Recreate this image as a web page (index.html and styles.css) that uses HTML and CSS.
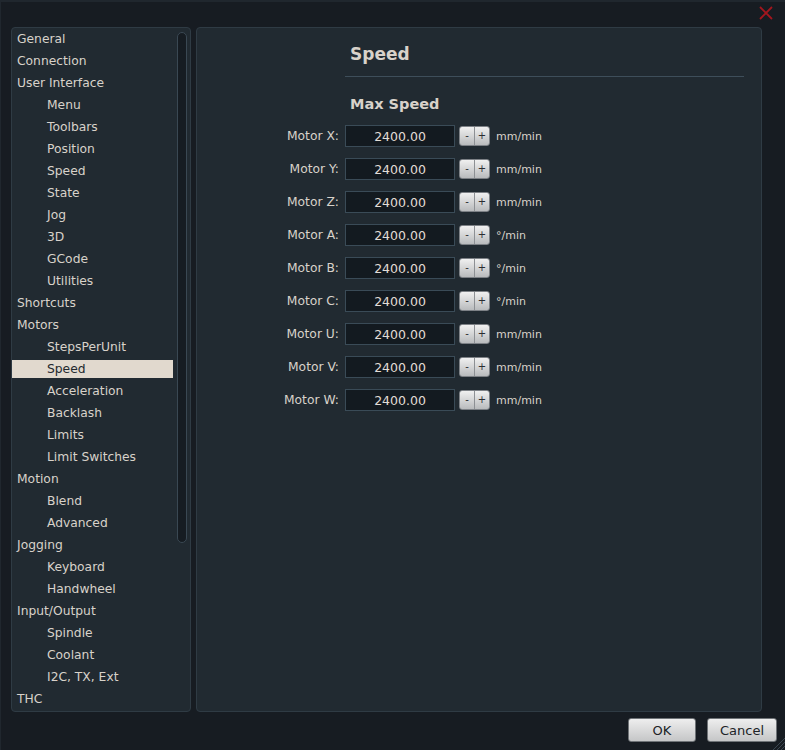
FILE: index.html
```html
<!DOCTYPE html>
<html lang="en">
<head>
    <meta charset="UTF-8">
    <title>Settings</title>
    <link rel="stylesheet" href="styles.css">
</head>
<body>
    <div class="dialog">
        <div class="titlebar">
            <span class="close-btn">
                <svg width="14" height="14" viewBox="0 0 14 14"><path d="M1 1 L13 13 M13 1 L1 13" stroke="#a3161e" stroke-width="1.8" fill="none"/></svg>
            </span>
        </div>

        <div class="main">
            <div class="nav">
                <ul class="nav-list">
                    <li>General</li>
                    <li>Connection</li>
                    <li>User Interface</li>
                    <li class="sub">Menu</li>
                    <li class="sub">Toolbars</li>
                    <li class="sub">Position</li>
                    <li class="sub">Speed</li>
                    <li class="sub">State</li>
                    <li class="sub">Jog</li>
                    <li class="sub">3D</li>
                    <li class="sub">GCode</li>
                    <li class="sub">Utilities</li>
                    <li>Shortcuts</li>
                    <li>Motors</li>
                    <li class="sub">StepsPerUnit</li>
                    <li class="sub active">Speed</li>
                    <li class="sub">Acceleration</li>
                    <li class="sub">Backlash</li>
                    <li class="sub">Limits</li>
                    <li class="sub">Limit Switches</li>
                    <li>Motion</li>
                    <li class="sub">Blend</li>
                    <li class="sub">Advanced</li>
                    <li>Jogging</li>
                    <li class="sub">Keyboard</li>
                    <li class="sub">Handwheel</li>
                    <li>Input/Output</li>
                    <li class="sub">Spindle</li>
                    <li class="sub">Coolant</li>
                    <li class="sub">I2C, TX, Ext</li>
                    <li>THC</li>
                </ul>
                <div class="scrollbar"></div>
            </div>

            <div class="content">
                <h2 class="page-title">Speed</h2>
                <h3 class="group-title">Max Speed</h3>
                <div class="form" id="form"></div>
            </div>
        </div>

        <div class="footer">
            <button class="btn btn-ok">OK</button>
            <button class="btn">Cancel</button>
            <svg class="grip" width="14" height="14" viewBox="0 0 14 14"><path d="M14 2 L2 14 M14 6 L6 14 M14 10 L10 14" stroke="#3a4650" stroke-width="1" fill="none"/></svg>
        </div>
    </div>

    <script>
        const motors = [
            ['X', 'mm/min'], ['Y', 'mm/min'], ['Z', 'mm/min'],
            ['A', '°/min'], ['B', '°/min'], ['C', '°/min'],
            ['U', 'mm/min'], ['V', 'mm/min'], ['W', 'mm/min']
        ];
        const form = document.getElementById('form');
        motors.forEach(([axis, unit]) => {
            form.insertAdjacentHTML('beforeend', `
                <label class="field-label">Motor ${axis}:</label>
                <div class="field">
                    <input class="field-input" type="text" value="2400.00">
                    <span class="spin"><span class="spin-half">-</span><span class="spin-half">+</span></span>
                    <span class="unit">${unit}</span>
                </div>`);
        });
    </script>
</body>
</html>
```

FILE: styles.css
```css
html, body {
    margin: 0;
    height: 100%;
}
body {
    font-family: 'DejaVu Sans', 'Liberation Sans', sans-serif;
    font-size: 12.3px;
    color: #d8d2ca;
    background-color: #171c22;
}
.dialog {
    height: 750px;
    box-sizing: border-box;
    border-top: 2px solid #20272e;
    border-left: 1px solid #20272e;
    display: flex;
    flex-direction: column;
}
.titlebar {
    height: 25px;
    display: flex;
    justify-content: flex-end;
    align-items: flex-start;
    padding-right: 12px;
}
.close-btn {
    margin-top: 4px;
    display: block;
    width: 14px;
    height: 14px;
}
.main {
    display: flex;
    gap: 5px;
    height: 685px;
    margin: 0 23px 0 10px;
}
.nav {
    width: 178px;
    background-color: #212a31;
    border: 1px solid #2f3b44;
    border-radius: 4px;
    display: flex;
    gap: 4px;
}
.nav-list {
    list-style: none;
    margin: 0;
    padding: 2px 0 0;
    width: 161px;
    display: flex;
    flex-direction: column;
    gap: 4px;
}
.nav-list li {
    height: 18px;
    line-height: 18px;
    padding-left: 5px;
    white-space: nowrap;
}
.nav-list li.sub {
    padding-left: 35px;
}
.nav-list li.active {
    background-color: #e1d9ce;
    color: #23292f;
}
.scrollbar {
    width: 8px;
    margin-top: 4px;
    height: 509px;
    background-color: #161c22;
    border: 1px solid #3a4853;
    border-radius: 5px;
}
.content {
    flex: 1;
    background-color: #212a31;
    border: 1px solid #2f3b44;
    border-radius: 4px;
    padding: 0 17px 0 148px;
}
.page-title {
    margin: 0;
    padding: 15px 0 11px 5px;
    font-size: 17px;
    font-weight: bold;
    line-height: 22px;
    border-bottom: 1px solid #3e4e5a;
}
.group-title {
    margin: 0;
    padding: 17px 0 0 5px;
    font-size: 14.5px;
    font-weight: bold;
    line-height: 20px;
}
.form {
    margin-top: 11px;
    margin-left: -148px;
    display: grid;
    grid-template-columns: 148px auto;
    row-gap: 11px;
    align-items: center;
}
.field-label {
    text-align: right;
    padding-right: 6px;
}
.field {
    display: flex;
    align-items: center;
}
.field-input {
    width: 110px;
    height: 22px;
    box-sizing: border-box;
    background-color: #131a20;
    border: 1px solid #3a4b57;
    color: #e2ddd6;
    font-family: inherit;
    font-size: 12.5px;
    text-align: center;
    padding: 0;
}
.spin {
    display: flex;
    margin-left: 4px;
    height: 20px;
    box-sizing: border-box;
    border: 1px solid #7d8186;
    border-radius: 3px;
    background: linear-gradient(#f0f0f0, #b9bbbd);
    overflow: hidden;
}
.spin-half {
    width: 14px;
    text-align: center;
    line-height: 18px;
    font-size: 10px;
    color: #2a2d30;
}
.spin-half + .spin-half {
    border-left: 1px solid #8d9094;
}
.unit {
    margin-left: 6px;
    font-size: 11px;
}
.footer {
    display: flex;
    justify-content: flex-end;
    align-items: flex-start;
    gap: 11px;
    padding: 6px 8px 0 0;
    position: relative;
    flex: 1;
}
.btn {
    height: 24px;
    width: 70px;
    font-family: inherit;
    font-size: 13px;
    color: #202326;
    background: linear-gradient(#eeeeee, #c5c6c7);
    border: 1px solid #6f7377;
    border-radius: 3px;
    padding: 0;
}
.btn-ok {
    width: 68px;
}
.grip {
    position: absolute;
    right: 0;
    bottom: 0;
}
```
